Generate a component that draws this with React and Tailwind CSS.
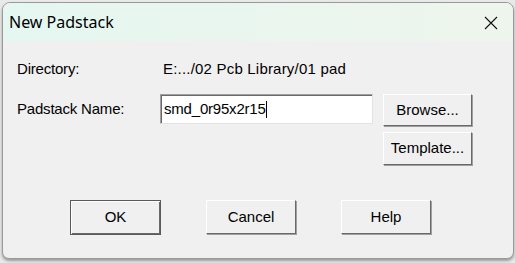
const btn =
  'flex items-center justify-center bg-[#f0f0f0] text-[15px] text-black border border-t-white border-l-white border-r-[#696969] border-b-[#696969] shadow-[1px_1px_0_#a0a0a0]';

const App = () => {
  return (
    <div className="w-[515px] h-[263px] bg-[#e9e9e9] overflow-hidden font-['Liberation_Sans',Arial,sans-serif]">
      <div className="ml-[2px] mt-[2px] w-[512px] h-[257px] rounded-t-[8px] rounded-b-[7px] border border-[#9a9a9a] bg-[#f0f0f0] overflow-hidden flex flex-col shadow-[0_2px_3px_#9a9a9a]">
        {/* Title bar */}
        <div className="h-[38px] shrink-0 flex items-center justify-between pl-[6px] pr-[15px] bg-gradient-to-r from-[#e5f7f1] to-[#eef5ec]">
          <span className="text-[16px] text-black font-['Noto_Sans',sans-serif]">New Padstack</span>
          <svg width="14" height="14" viewBox="0 0 14 14" className="mt-[1px]">
            <path d="M1 1 L13 13 M13 1 L1 13" stroke="#111" strokeWidth="1.1" fill="none" />
          </svg>
        </div>

        {/* Body */}
        <div className="flex-1 pl-[14px] pr-[38px] pt-[18px]">
          <div className="flex items-center h-[20px] text-[15px] text-black tracking-[-0.2px]">
            <span className="w-[146px]">Directory:</span>
            <span className="tracking-[0.2px]">E:.../02 Pcb Library/01 pad</span>
          </div>

          <div className="flex mt-[15px]">
            <span className="w-[143px] text-[15px] pt-[4px] tracking-[-0.2px]">Padstack Name:</span>
            <div className="w-[213px] h-[30px] bg-white border border-t-[#a0a0a0] border-l-[#a0a0a0] border-r-[#e3e3e3] border-b-[#e3e3e3] shadow-[inset_1px_1px_0_#696969] flex items-center pl-[3px] text-[15px] tracking-[-0.2px]">
              smd_0r95x2r15
              <span className="w-[1px] h-[17px] bg-black" />
            </div>
            <div className="ml-[10px] flex flex-col gap-[6px]">
              <div className={`${btn} w-[89px] h-[32px]`}>Browse...</div>
              <div className={`${btn} w-[89px] h-[33px]`}>Template...</div>
            </div>
          </div>

          <div className="flex mt-[35px] pl-[53px] gap-[45px]">
            <div className="w-[91px] h-[35px] flex items-center justify-center bg-[#f0f0f0] text-[15px] border border-[#5a5a5a] shadow-[inset_1px_1px_0_white,inset_-1px_-1px_0_#696969]">
              OK
            </div>
            <div className={`${btn} w-[90px] h-[34px]`}>Cancel</div>
            <div className={`${btn} w-[90px] h-[34px]`}>Help</div>
          </div>
        </div>
      </div>
    </div>
  );
};

export default App;
